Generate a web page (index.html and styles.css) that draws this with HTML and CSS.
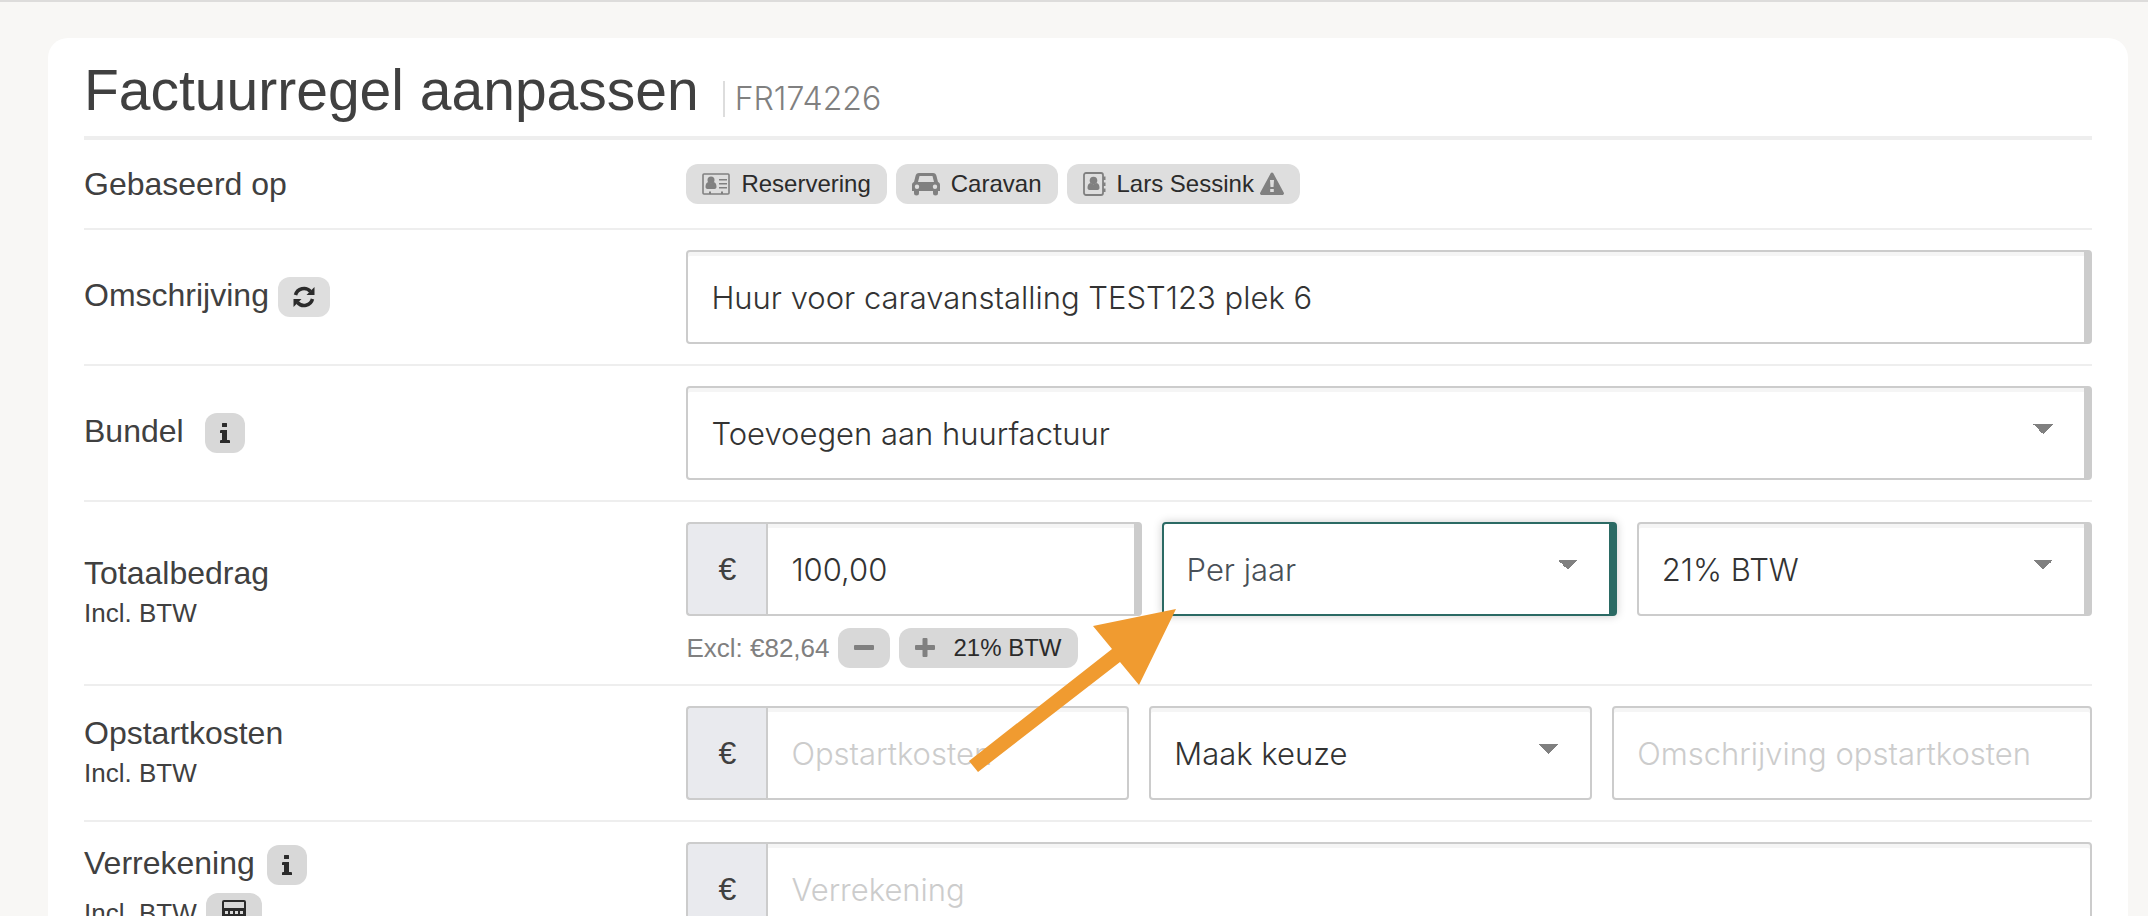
FILE: index.html
```html
<!DOCTYPE html>
<html lang="nl">
<head>
  <meta charset="UTF-8" />
  <meta name="viewport" content="width=device-width, initial-scale=1.0"/>
  <title>Factuurregel aanpassen</title>
  <link rel="stylesheet" href="styles.css">
</head>
<body>
  <main class="card">
    <header class="card-header">
      <h1>Factuurregel aanpassen</h1>
      <span class="record-id">FR174226</span>
    </header>

    <form>
      <!-- GEBASEERD OP -->
      <div class="form-row form-row-small">
        <div class="row-label">Gebaseerd op</div>
        <div class="chips">
          <a href="#" class="chip">
            <svg class="icon" width="28" height="24" viewBox="0 0 28 24"><path fill="none" stroke="currentColor" stroke-width="1.600" d="M2 2h24a1 1 0 0 1 1 1v18a1 1 0 0 1-1 1H2a1 1 0 0 1-1-1V3a1 1 0 0 1 1-1z"/><circle cx="9" cy="8" r="3.500"/><path d="M3.500 15c0-3 1-4.800 3-5 1.500 1.500 3.500 1.500 5 0 2 .2 3 2 3 5 0 1-1 2-2 2h-7c-1 0-2-1-2-2zM17 7h8v1.600h-8zM17 11h8v1.600h-8zM17 15h8v1.600h-8zM7 19.500h2V22H7zM19 19.500h2V22h-2z"/></svg>
            Reservering
          </a>
          <a href="#" class="chip">
            <svg class="icon" width="28" height="24" viewBox="0 0 28 24"><path fill-rule="evenodd" d="M7 1h14c2 0 3 1 3.500 3l1.500 6c1.500.5 2 1.500 2 3v6h-2v2a2.500 2.500 0 0 1-5 0v-2H7v2a2.500 2.500 0 0 1-5 0v-2H0v-6c0-1.500.5-2.500 2-3l1.500-6C4 2 5 1 7 1zM7.500 4 6 10h16l-1.500-6zM5 12.500a2.200 2.200 0 1 0 0 4.400 2.200 2.200 0 0 0 0-4.400zM23 12.500a2.200 2.200 0 1 0 0 4.400 2.200 2.200 0 0 0 0-4.400z"/></svg>
            Caravan
          </a>
          <a href="#" class="chip">
            <svg class="icon" width="23" height="26" viewBox="0 0 23 26"><path fill="none" stroke="currentColor" stroke-width="1.800" d="M3 2h15a2 2 0 0 1 2 2v18a2 2 0 0 1-2 2H3a2 2 0 0 1-2-2V4a2 2 0 0 1 2-2z"/><circle cx="10.500" cy="9.500" r="3.800"/><path d="M4.500 17c0-3 1-4.800 3-5 1.800 1.500 4.200 1.500 6 0 2 .2 3 2 3 5 0 1-1 2-2 2h-8c-1 0-2-1-2-2zM20 5.500h2.500V9H20zM20 11.500h2.500V15H20zM20 17.500h2.500V21H20z"/></svg>
            Lars Sessink
            <svg class="icon icon-warning" width="24" height="24" viewBox="0 0 24 24"><path fill-rule="evenodd" d="M13.300 1.300 23.700 20.500c.8 1.400-.2 2.500-1.500 2.500H1.800C.5 23-.5 21.900.3 20.500L10.700 1.300c.6-1.100 2-1.100 2.600 0zM10 8l.5 7h3l.5-7zM10.200 17v3h3.600v-3z"/></svg>
          </a>
        </div>
      </div>

      <!-- OMSCHRIJVING -->
      <div class="form-row">
        <div class="row-label">
          <label for="omschrijving">Omschrijving</label>
          <button type="button" class="label-btn" aria-label="Vernieuwen">
            <svg class="icon" width="22" height="22" viewBox="0 0 22 22"><path fill="none" stroke="currentColor" stroke-width="3.500" d="M2.500 9A8.700 8.700 0 0 1 17.500 5.500M19.500 13a8.700 8.700 0 0 1-15 3.500"/><path d="M21.500 1v8h-8zM.5 21v-8h8z"/></svg>
          </button>
        </div>
        <input type="text" id="omschrijving" class="field required" value="Huur voor caravanstalling TEST123 plek 6">
      </div>

      <!-- BUNDEL -->
      <div class="form-row">
        <div class="row-label row-label-wide">
          <label for="bundel">Bundel</label>
          <button type="button" class="label-btn info-btn" aria-label="Info">
            <svg class="icon" width="10" height="20" viewBox="0 0 10 20"><path d="M2.500 0h4a.5.5 0 0 1 .5.500v3a.5.5 0 0 1-.5.500h-4a.5.5 0 0 1-.5-.5v-3a.5.5 0 0 1 .5-.5zM1 7h6v10h2a1 1 0 0 1 1 1v2H0v-2a1 1 0 0 1 1-1h1v-7H0V8a1 1 0 0 1 1-1z"/></svg>
          </button>
        </div>
        <select id="bundel" class="field required">
          <option>Toevoegen aan huurfactuur</option>
        </select>
      </div>

      <!-- TOTAALBEDRAG -->
      <div class="form-row form-row-amount">
        <div class="row-label stacked">
          <label for="totaalbedrag">Totaalbedrag</label>
          <small>Incl. BTW</small>
        </div>
        <div class="amount">
          <div class="field-group thirds">
            <div class="input-group">
              <span class="addon">€</span>
              <input type="text" id="totaalbedrag" class="field required" value="100,00">
            </div>
            <select class="field required active" aria-label="Periode">
              <option>Per jaar</option>
            </select>
            <select class="field required" aria-label="BTW tarief">
              <option>21% BTW</option>
            </select>
          </div>
          <div class="chips help">
            <span>Excl: €82,64</span>
            <button type="button" class="chip chip-dark" aria-label="BTW eraf">
              <svg class="icon" width="20" height="20" viewBox="0 0 20 20"><rect y="7" width="20" height="5" rx="1"/></svg>
            </button>
            <button type="button" class="chip chip-dark">
              <svg class="icon" width="20" height="20" viewBox="0 0 20 20"><path d="M8.500 0h3a1 1 0 0 1 1 1v6H19a1 1 0 0 1 1 1v3a1 1 0 0 1-1 1h-6.500v6a1 1 0 0 1-1 1h-3a1 1 0 0 1-1-1v-6H1a1 1 0 0 1-1-1V8a1 1 0 0 1 1-1h6.500V1a1 1 0 0 1 1-1z"/></svg>
              21% BTW
            </button>
          </div>
          <svg class="arrow" width="208" height="164" viewBox="0 0 208 164"><path d="M207 0 124 17l19 23L0 152l9 11 142-110 19 23z"/></svg>
        </div>
      </div>

      <!-- OPSTARTKOSTEN -->
      <div class="form-row">
        <div class="row-label stacked">
          <label for="opstartkosten">Opstartkosten</label>
          <small>Incl. BTW</small>
        </div>
        <div class="field-group startup">
          <div class="input-group">
            <span class="addon">€</span>
            <input type="text" id="opstartkosten" class="field" placeholder="Opstartkosten">
          </div>
          <select class="field" aria-label="Keuze opstartkosten">
            <option>Maak keuze</option>
          </select>
          <input type="text" class="field" aria-label="Omschrijving opstartkosten" placeholder="Omschrijving opstartkosten">
        </div>
      </div>

      <!-- VERREKENING -->
      <div class="form-row">
        <div class="row-label stacked with-buttons">
          <div class="label-line">
            <label for="verrekening">Verrekening</label>
            <button type="button" class="label-btn info-btn" aria-label="Info">
              <svg class="icon" width="10" height="20" viewBox="0 0 10 20"><path d="M2.500 0h4a.5.5 0 0 1 .5.500v3a.5.5 0 0 1-.5.500h-4a.5.5 0 0 1-.5-.5v-3a.5.5 0 0 1 .5-.5zM1 7h6v10h2a1 1 0 0 1 1 1v2H0v-2a1 1 0 0 1 1-1h1v-7H0V8a1 1 0 0 1 1-1z"/></svg>
            </button>
          </div>
          <div class="label-line">
            <small>Incl. BTW</small>
            <button type="button" class="label-btn calc-btn" aria-label="Rekenmachine">
              <svg class="icon" width="24" height="26" viewBox="0 0 24 26"><path fill-rule="evenodd" d="M2 0h20a2 2 0 0 1 2 2v22a2 2 0 0 1-2 2H2a2 2 0 0 1-2-2V2a2 2 0 0 1 2-2zM2 2v6h20V2zM3 11v3h3v-3zM8 11v3h3v-3zM13 11v3h3v-3zM18 11v3h3v-3zM3 16v3h3v-3zM8 16v3h3v-3zM13 16v3h3v-3zM18 16v8h3v-8zM3 21v3h3v-3zM8 21v3h3v-3zM13 21v3h3v-3z"/></svg>
            </button>
          </div>
        </div>
        <div class="input-group">
          <span class="addon">€</span>
          <input type="text" id="verrekening" class="field" placeholder="Verrekening">
        </div>
      </div>
    </form>
  </main>
</body>
</html>
```
FILE: styles.css
```css
* {
  box-sizing: border-box;
}

body {
  margin: 0;
  padding: 36px 20px 0 48px;
  border-top: 2px solid #dddcdb;
  background-color: #f8f7f5;
  color: #404040;
  font-family: "Liberation Sans", Arial, sans-serif;
  font-size: 32px;
  line-height: 40px;
  height: 100vh;
  overflow: hidden;
}

.card {
  background: #fff;
  border-radius: 20px;
  padding: 20px 36px;
}

.card-header {
  display: flex;
  align-items: baseline;
  gap: 24px;
  height: 82px;
  border-bottom: 4px solid #eee;
}

.card-header h1 {
  margin: 0;
  font-size: 57px;
  font-weight: normal;
  line-height: 64px;
}

.record-id {
  padding-left: 10px;
  border-left: 2px solid #ddd;
  color: #808080;
  font-family: Inter, "Liberation Sans", sans-serif;
  font-size: 32px;
  font-weight: 300;
  line-height: 36px;
}

.form-row {
  display: grid;
  grid-template-columns: 30% 1fr;
  align-items: center;
  padding: 20px 0;
  border-bottom: 2px solid #eee;
}

.form-row-small {
  padding: 24px 0;
}

.form-row-amount {
  padding-bottom: 16px;
}

.form-row-amount .stacked {
  padding-bottom: 4px;
}

/* labels */
.row-label,
.label-line {
  display: flex;
  align-items: center;
  gap: 9px;
}

.row-label label {
  padding-bottom: 4px;
  line-height: 36px;
}

.row-label-wide {
  gap: 21px;
}

.label-line:first-child {
  gap: 12px;
}

.stacked {
  flex-direction: column;
  align-items: flex-start;
  gap: 0;
}

.stacked small {
  font-size: 26px;
  line-height: 36px;
}

.with-buttons {
  gap: 8px;
}

.label-btn {
  display: flex;
  align-items: center;
  justify-content: center;
  width: 52px;
  height: 40px;
  padding: 0;
  border: none;
  border-radius: 12px;
  background: #dedede;
  color: #2b2b2b;
  cursor: pointer;
}

.info-btn {
  width: 40px;
  background: #d8d8d8;
}

.calc-btn {
  width: 56px;
  background: #d8d8d8;
}

.icon {
  flex: none;
  fill: currentColor;
}

/* chips */
.chips {
  display: flex;
  align-items: center;
  gap: 9px;
  font-size: 24px;
}

.chip {
  display: flex;
  align-items: center;
  gap: 11px;
  height: 40px;
  padding: 0 16px;
  border: none;
  border-radius: 12px;
  background: #dedede;
  color: #2b2b2b;
  font-family: inherit;
  font-size: 24px;
  text-decoration: none;
}

.chip-dark {
  gap: 18px;
  background: #d8d8d8;
}

.chip .icon {
  color: #808080;
}

.chip .icon-warning {
  margin-left: -5px;
}

.help {
  margin-top: 12px;
  color: #808080;
  font-size: 26px;
}

/* fields */
.field {
  width: 100%;
  min-width: 0;
  height: 94px;
  padding: 0 23px;
  border: 2px solid #ccc;
  border-radius: 4px;
  background-color: #fff;
  box-shadow: inset 0 4px 0 #f5f5f5;
  color: #333;
  font-family: Inter, "Liberation Sans", sans-serif;
  font-size: 31px;
  font-weight: 300;
  outline: none;
}

.field::placeholder {
  color: #ccc;
  opacity: 1;
}

.required {
  border-right-width: 8px;
}

select.field {
  appearance: none;
  background-image:
    linear-gradient(to bottom right, #808080 50%, transparent 50%),
    linear-gradient(to bottom left, #808080 50%, transparent 50%);
  background-position: right 31px top 36px, right 41px top 36px;
  background-size: 10px 10px;
  background-repeat: no-repeat;
}

.active {
  border-color: #2b6a64;
  box-shadow: 0 0 10px rgba(0, 0, 0, 0.2);
  color: #495057;
}

.field-group {
  display: grid;
  gap: 20px;
}

.thirds {
  grid-template-columns: repeat(3, 1fr);
}

.startup {
  grid-template-columns: 12fr 12fr 13fr;
}

.input-group {
  display: flex;
  min-width: 0;
}

.addon {
  display: flex;
  flex: none;
  align-items: center;
  justify-content: center;
  width: 80px;
  border: 2px solid #ccc;
  border-right: none;
  border-radius: 4px 0 0 4px;
  background: #e9eaee;
}

.input-group .field {
  border-radius: 0 4px 4px 0;
}

.amount {
  position: relative;
}

/* pointer to the period select */
.arrow {
  position: absolute;
  top: 87px;
  left: 283px;
  fill: #f09b30;
  pointer-events: none;
}
```
